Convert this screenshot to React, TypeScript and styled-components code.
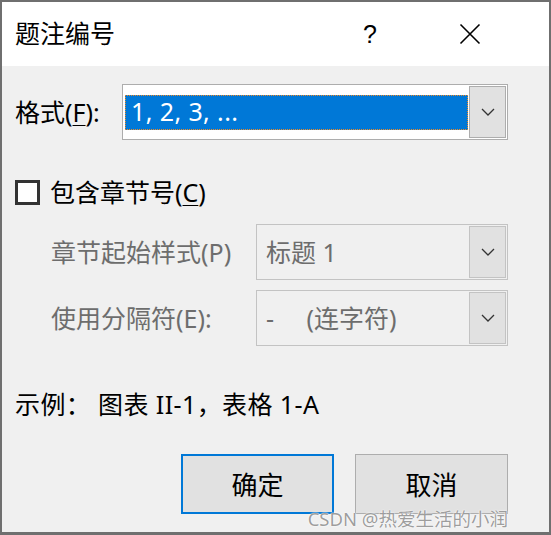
import React from 'react';
import styled, { createGlobalStyle } from 'styled-components';

const GlobalStyle = createGlobalStyle`
  html, body {
    margin: 0;
    padding: 0;
    background: #6b6b6b;
  }
  body {
    font-family: "Noto Sans", "Noto Sans CJK SC", sans-serif;
  }
`;

const Window = styled.div`
  width: 551px;
  height: 535px;
  box-sizing: border-box;
  border: 2px solid #6f6f6f;
  border-bottom-width: 3px;
  background: #f0f0f0;
  display: flex;
  flex-direction: column;
  position: relative;
  overflow: hidden;
`;

const TitleBar = styled.div`
  height: 64px;
  background: #ffffff;
  display: flex;
  align-items: center;
  padding-left: 13px;
`;

const Title = styled.div`
  flex: 1;
  font-size: 25px;
  color: #000;
  line-height: 1;
  margin-top: -2px;
`;

const TitleButton = styled.div<{ $width: number }>`
  width: ${(p) => p.$width}px;
  display: flex;
  align-items: center;
  justify-content: center;
  font-family: "Liberation Sans", sans-serif;
  font-size: 25px;
  color: #000;
`;

const Body = styled.div`
  flex: 1;
  padding: 18px 0 0 13px;
  display: flex;
  flex-direction: column;
`;

const Row = styled.div<{ $top: number; $indent?: number }>`
  display: flex;
  align-items: center;
  margin-top: ${(p) => p.$top}px;
  padding-left: ${(p) => p.$indent || 0}px;
`;

const Label = styled.div<{ $width: number; $disabled?: boolean }>`
  width: ${(p) => p.$width}px;
  font-size: 25px;
  color: ${(p) => (p.$disabled ? '#6d6d6d' : '#000')};
  line-height: 1;
  white-space: nowrap;
`;

const U = styled.span`
  text-decoration: underline;
  text-underline-offset: 3px;
  text-decoration-thickness: 1px;
`;

const Combo = styled.div<{ $width: number; $disabled?: boolean }>`
  width: ${(p) => p.$width}px;
  height: 56px;
  box-sizing: border-box;
  border: 1px solid ${(p) => (p.$disabled ? '#c3c3c3' : '#adadad')};
  background: ${(p) => (p.$disabled ? '#f0f0f0' : '#ffffff')};
  display: flex;
  align-items: stretch;
  padding: 1px 1px 1px 0;
`;

const Field = styled.div`
  flex: 1;
  display: flex;
  align-items: center;
  padding: 0 1px 0 2px;
`;

const Selected = styled.div`
  flex: 1;
  height: 35px;
  box-sizing: border-box;
  background: #0078d7;
  border: 1px dotted #f08a24;
  color: #fff;
  font-size: 25px;
  letter-spacing: 0.4px;
  display: flex;
  align-items: center;
  padding-left: 5px;
  padding-bottom: 2px;
`;

const Value = styled.div`
  font-size: 25px;
  color: #6d6d6d;
  padding-left: 7px;
  white-space: pre;
  line-height: 1;
`;

const DropButton = styled.div<{ $disabled?: boolean }>`
  width: 37px;
  box-sizing: border-box;
  border: 1px solid ${(p) => (p.$disabled ? '#c3c3c3' : '#adadad')};
  background: #e1e1e1;
  display: flex;
  align-items: center;
  justify-content: center;
`;

const Checkbox = styled.div`
  width: 25px;
  height: 25px;
  box-sizing: border-box;
  border: 3px solid #333333;
  background: #fff;
  margin-right: 10px;
`;

const Example = styled.div`
  margin-top: 46px;
  font-size: 25px;
  color: #000;
  line-height: 1;
  white-space: pre;
  letter-spacing: 0.4px;
`;

const ButtonRow = styled.div`
  display: flex;
  gap: 21px;
  margin-top: 37px;
  padding-left: 166px;
`;

const Button = styled.div<{ $primary?: boolean }>`
  width: 153px;
  height: 60px;
  box-sizing: border-box;
  background: #e1e1e1;
  border: ${(p) => (p.$primary ? '2px solid #0078d7' : '1px solid #adadad')};
  display: flex;
  align-items: center;
  justify-content: center;
  font-size: 26px;
  color: #000;
`;

const Watermark = styled.div`
  position: absolute;
  right: 41px;
  bottom: 4px;
  font-size: 18.5px;
  color: rgba(140, 140, 140, 0.85);
  text-shadow: 0 0 2px #fff, 0 0 1px #fff;
  white-space: nowrap;
  line-height: 1;
`;

const Chevron = () => (
  <svg width="14" height="8" viewBox="0 0 14 8">
    <path d="M1 1 L7 7 L13 1" fill="none" stroke="#333" strokeWidth="1.3" />
  </svg>
);

const CloseIcon = () => (
  <svg width="22" height="22" viewBox="0 0 22 22">
    <path d="M1.5 1.5 L20.5 20.5 M20.5 1.5 L1.5 20.5" stroke="#000" strokeWidth="1.6" />
  </svg>
);

const App = () => (
  <>
    <GlobalStyle />
    <Window>
      <TitleBar>
        <Title>题注编号</Title>
        <TitleButton $width={50}>?</TitleButton>
        <TitleButton $width={51} />
        <TitleButton $width={48}>
          <CloseIcon />
        </TitleButton>
        <TitleButton $width={55} />
      </TitleBar>
      <Body>
        <Row $top={0}>
          <Label $width={107}>
            格式(<U>F</U>):
          </Label>
          <Combo $width={386}>
            <Field>
              <Selected>1, 2, 3, ...</Selected>
            </Field>
            <DropButton>
              <Chevron />
            </DropButton>
          </Combo>
        </Row>
        <Row $top={40}>
          <Checkbox />
          <Label $width={200}>
            包含章节号(<U>C</U>)
          </Label>
        </Row>
        <Row $top={19} $indent={36}>
          <Label $width={205} $disabled>
            章节起始样式(P)
          </Label>
          <Combo $width={252} $disabled>
            <Field>
              <Value>标题 1</Value>
            </Field>
            <DropButton $disabled>
              <Chevron />
            </DropButton>
          </Combo>
        </Row>
        <Row $top={10} $indent={36}>
          <Label $width={205} $disabled>
            使用分隔符(E):
          </Label>
          <Combo $width={252} $disabled>
            <Field>
              <Value>{'-     (连字符)'}</Value>
            </Field>
            <DropButton $disabled>
              <Chevron />
            </DropButton>
          </Combo>
        </Row>
        <Example>{'示例： 图表 II-1，表格 1-A'}</Example>
        <ButtonRow>
          <Button $primary>确定</Button>
          <Button>取消</Button>
        </ButtonRow>
      </Body>
      <Watermark>CSDN @热爱生活的小润</Watermark>
    </Window>
  </>
);

export default App;
